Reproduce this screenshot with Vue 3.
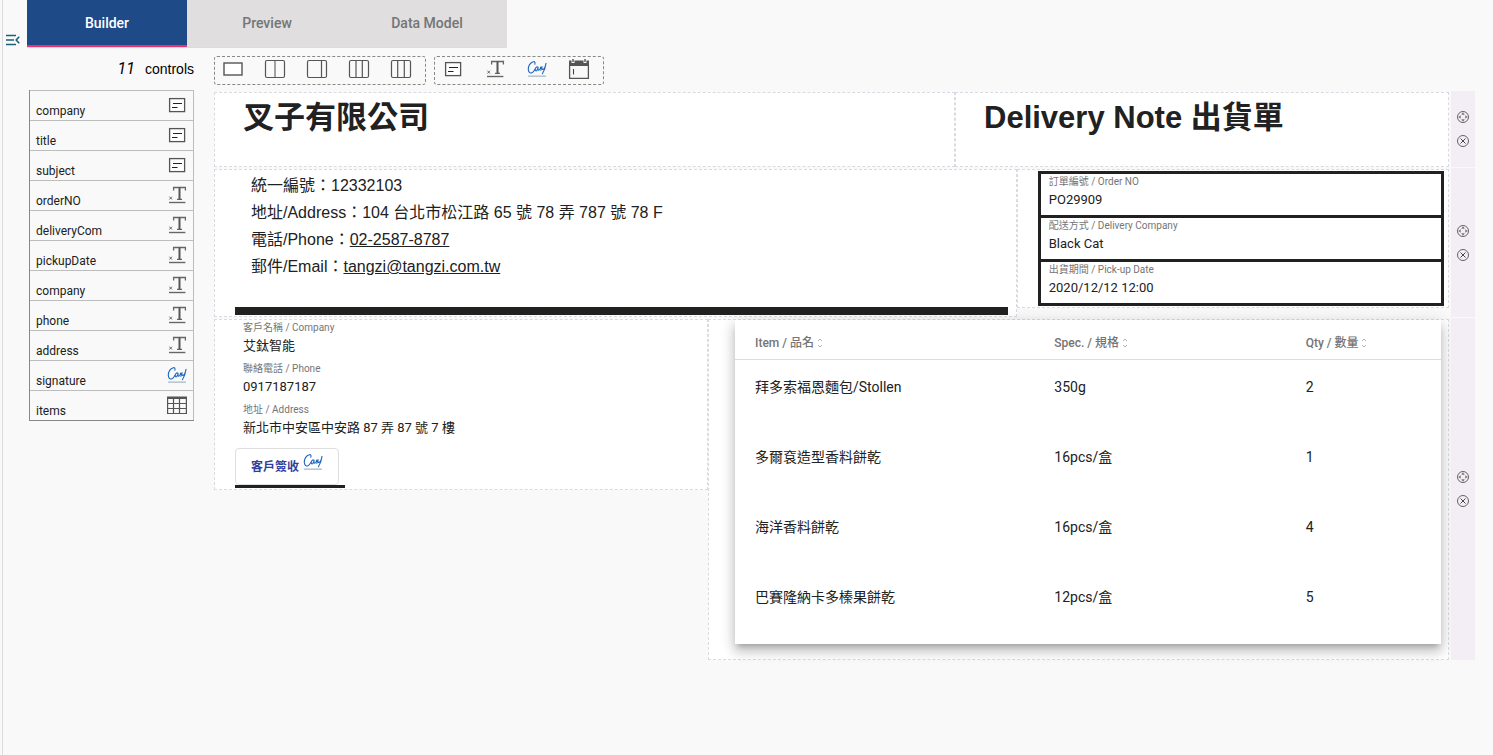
<script setup>
import { ref } from 'vue'

const tabs = ['Builder', 'Preview', 'Data Model']
const activeTab = ref('Builder')

const controls = [
  { name: 'company', icon: 'label' },
  { name: 'title', icon: 'label' },
  { name: 'subject', icon: 'label' },
  { name: 'orderNO', icon: 'input' },
  { name: 'deliveryCom', icon: 'input' },
  { name: 'pickupDate', icon: 'input' },
  { name: 'company', icon: 'input' },
  { name: 'phone', icon: 'input' },
  { name: 'address', icon: 'input' },
  { name: 'signature', icon: 'sign' },
  { name: 'items', icon: 'grid' },
]

const toolGroups = [
  ['col-1', 'col-2', 'col-2-side', 'col-3', 'col-3-wide'],
  ['label', 'input', 'sign', 'calendar'],
]

const orderFields = [
  { label: '訂單編號 / Order NO', value: 'PO29909' },
  { label: '配送方式 / Delivery Company', value: 'Black Cat' },
  { label: '出貨期間 / Pick-up Date', value: '2020/12/12 12:00' },
]

const customerFields = [
  { label: '客戶名稱 / Company', value: '艾鈦智能' },
  { label: '聯絡電話 / Phone', value: '0917187187' },
  { label: '地址 / Address', value: '新北市中安區中安路 87 弄 87 號 7 樓' },
]

const columns = ['Item / 品名', 'Spec. / 規格', 'Qty / 數量']
const items = [
  ['拜多索福恩麵包/Stollen', '350g', '2'],
  ['多爾袞造型香料餅乾', '16pcs/盒', '1'],
  ['海洋香料餅乾', '16pcs/盒', '4'],
  ['巴賽隆納卡多榛果餅乾', '12pcs/盒', '5'],
]
</script>

<template>
  <div class="page">
    <svg class="sprite" aria-hidden="true">
      <symbol id="i-col-1" viewBox="0 0 24 24">
        <rect x="3" y="6" width="18" height="12" fill="#fff" stroke="#555" stroke-width="1.4" />
      </symbol>
      <symbol id="i-col-2" viewBox="0 0 24 24">
        <rect x="2.5" y="3.5" width="19" height="17" rx="1.5" fill="none" stroke="#555" stroke-width="1.2" />
        <path d="M12 4v16" stroke="#666" stroke-width="1.2" />
      </symbol>
      <symbol id="i-col-2-side" viewBox="0 0 24 24">
        <rect x="2.5" y="3.5" width="19" height="17" rx="1.5" fill="none" stroke="#555" stroke-width="1.2" />
        <path d="M16.5 4v16" stroke="#555" stroke-width="1.2" />
      </symbol>
      <symbol id="i-col-3" viewBox="0 0 24 24">
        <rect x="2.5" y="3.5" width="19" height="17" rx="1.5" fill="none" stroke="#555" stroke-width="1.2" />
        <path d="M9 4v16M15.3 4v16" stroke="#555" stroke-width="1.2" />
      </symbol>
      <symbol id="i-col-3-wide" viewBox="0 0 24 24">
        <rect x="2.5" y="3.5" width="19" height="17" rx="1.5" fill="none" stroke="#555" stroke-width="1.2" />
        <path d="M8.7 4v16M15.3 4v16" stroke="#555" stroke-width="1.2" />
      </symbol>
      <symbol id="i-label" viewBox="0 0 24 24">
        <rect x="4.6" y="5.6" width="15" height="13" fill="#fff" stroke="#555" stroke-width="1.3" />
        <path d="M8 10.500h9M7 14.500h5.500" stroke="#222" stroke-width="1.2" />
      </symbol>
      <symbol id="i-input" viewBox="0 0 24 24">
        <path d="M8.600 7.500v-3h11.800v3M12 16.400h5" fill="none" stroke="#666" stroke-width="1.3" />
        <path d="M14.500 4.500v12" stroke="#555" stroke-width="2" />
        <path d="M4.400 13.700l2.600 2.800M7 13.700l-2.600 2.800" stroke="#555" stroke-width=".9" />
        <path d="M4 19.500h16.400" stroke="#666" stroke-width="1.4" />
      </symbol>
      <symbol id="i-sign" viewBox="0 0 24 24">
        <path
          d="M9.800 7.200c.6-1.700 0-2.900-1.500-2.500C5.200 5.400 3 9.200 3.300 12.600c.3 3.200 2.600 4.400 4.600 2.600.9-.8 1.500-2 2.100-3.200M13 10.200c-1.300-.9-2.600.6-2.800 2.200-.1 1.500.9 1.900 1.700.9.600-.8 1-1.700 1.200-2.700-.3 1.700 0 2.900.8 2.600.9-.4 1.400-1.700 1.700-3.200.5 1.200.9 2.400.3 3.300M17 9.600c-.2 1.600 0 3 .8 2.900 1.300-.2 2.600-3.300 3.200-6.200-.5 3.600-1.600 7.400-3.600 10.400"
          fill="none" stroke="#1f66c1" stroke-width="1.1" stroke-linecap="round" stroke-linejoin="round" />
        <path d="M3 19.200h18" stroke="#b9c6d0" stroke-width="1.600" />
      </symbol>
      <symbol id="i-calendar" viewBox="0 0 24 24">
        <path d="M2 3.500h2.500v2.500h3v-2.500h9v2.500h3v-2.500h2.500v5.500H2z" fill="#555" />
        <path d="M6 2v3M18 2v3" stroke="#555" stroke-width="1.400" />
        <path d="M2.600 8v13.300h18.800V8" fill="none" stroke="#555" stroke-width="1.300" />
        <path d="M6.500 12v5.500" stroke="#444" stroke-width="1.100" />
      </symbol>
      <symbol id="i-grid" viewBox="0 0 24 24">
        <path d="M2 3.500h20v2.500H2z" fill="#555" />
        <path d="M2.600 4v16.500h18.800V4M2 10.500h20M2 15.500h20M8.500 6v14.500M14.500 6v14.500" fill="none" stroke="#555" stroke-width="1.200" />
      </symbol>
      <symbol id="i-move" viewBox="0 0 14 14">
        <circle cx="7" cy="7" r="5.500" fill="none" stroke="#555" stroke-width=".9" />
        <path d="M7 2.300l1.800 2.400h-3.600zM7 11.700l1.800-2.400h-3.600zM2.300 7l2.400-1.800v3.600zM11.700 7L9.300 5.200v3.600z" fill="#777" />
      </symbol>
      <symbol id="i-remove" viewBox="0 0 14 14">
        <circle cx="7" cy="7" r="5.500" fill="none" stroke="#555" stroke-width=".9" />
        <path d="M4.500 4.500l5 5M9.500 4.500l-5 5" stroke="#333" stroke-width=".9" />
      </symbol>
      <symbol id="i-sort" viewBox="0 0 8 12">
        <path d="M2 4L4 2l2 2M2 8l2 2 2-2" fill="none" stroke="#aaa" stroke-width=".9" />
      </symbol>
    </svg>

    <aside class="gutter">
      <button class="toggle" type="button" aria-label="Collapse controls">
        <svg width="16" height="12" viewBox="0 0 16 12">
          <path d="M1 1.500h10M1 6h8M1 10.500h10M14.200 2.800L11.200 6l3 3.200" fill="none" stroke="#1d5f7c" stroke-width="1.600" />
        </svg>
      </button>
    </aside>

    <div class="main">
      <nav class="tabs" role="tablist">
        <button
          v-for="tab in tabs" :key="tab" type="button" role="tab" class="tab"
          :class="{ active: tab === activeTab }" :aria-selected="tab === activeTab"
          @click="activeTab = tab"
        >{{ tab }}</button>
      </nav>

      <div class="body">
        <section class="sidebar">
          <h2 class="count"><em>{{ controls.length }}</em><span>controls</span></h2>
          <ul class="control-list">
            <li v-for="(control, i) in controls" :key="i">
              <span class="control-name">{{ control.name }}</span>
              <svg class="icon"><use :href="'#i-' + control.icon" /></svg>
            </li>
          </ul>
        </section>

        <main class="workspace">
          <div class="toolbar">
            <div v-for="(group, g) in toolGroups" :key="g" class="tool-group">
              <button v-for="tool in group" :key="tool" type="button" class="tool" :aria-label="tool">
                <svg class="icon"><use :href="'#i-' + tool" /></svg>
              </button>
            </div>
          </div>

          <div class="row">
            <div class="cells split-60">
              <div class="cell"><h1>叉子有限公司</h1></div>
              <div class="cell"><h1>Delivery Note 出貨單</h1></div>
            </div>
            <div class="strip">
              <button type="button" aria-label="Move row"><svg><use href="#i-move" /></svg></button>
              <button type="button" aria-label="Remove row"><svg><use href="#i-remove" /></svg></button>
            </div>
          </div>

          <div class="row">
            <div class="cells split-65">
              <div class="cell contact-cell">
                <address class="contact">
                  <p>統一編號：12332103</p>
                  <p>地址/Address：104 台北市松江路 65 號 78 弄 787 號 78 F</p>
                  <p>電話/Phone：<a href="tel:02-2587-8787">02-2587-8787</a></p>
                  <p>郵件/Email：<a href="mailto:tangzi@tangzi.com.tw">tangzi@tangzi.com.tw</a></p>
                </address>
              </div>
              <div class="cell order-cell">
                <dl class="order">
                  <div v-for="field in orderFields" :key="field.label" class="field">
                    <dt>{{ field.label }}</dt>
                    <dd>{{ field.value }}</dd>
                  </div>
                </dl>
              </div>
            </div>
            <div class="strip">
              <button type="button" aria-label="Move row"><svg><use href="#i-move" /></svg></button>
              <button type="button" aria-label="Remove row"><svg><use href="#i-remove" /></svg></button>
            </div>
          </div>

          <div class="row">
            <div class="cells split-40">
              <div class="cell customer-cell">
                <dl>
                  <div v-for="field in customerFields" :key="field.label" class="field">
                    <dt>{{ field.label }}</dt>
                    <dd>{{ field.value }}</dd>
                  </div>
                </dl>
                <div class="sign-line">
                  <button type="button" class="sign-button">
                    客戶簽收
                    <svg class="icon"><use href="#i-sign" /></svg>
                  </button>
                </div>
              </div>
              <div class="cell table-cell">
                <table>
                  <thead>
                    <tr>
                      <th v-for="column in columns" :key="column" scope="col">
                        {{ column }}<svg class="sort"><use href="#i-sort" /></svg>
                      </th>
                    </tr>
                  </thead>
                  <tbody>
                    <tr v-for="item in items" :key="item[0]">
                      <td v-for="(value, v) in item" :key="v">{{ value }}</td>
                    </tr>
                  </tbody>
                </table>
              </div>
            </div>
            <div class="strip">
              <button type="button" aria-label="Move row"><svg><use href="#i-move" /></svg></button>
              <button type="button" aria-label="Remove row"><svg><use href="#i-remove" /></svg></button>
            </div>
          </div>
        </main>
      </div>
    </div>
  </div>
</template>

<style>
body {
  background: #f9f9f9;
}
</style>

<style scoped>
.page {
  display: flex;
  min-height: 100vh;
  margin-left: 2px;
  border-left: 1px solid #dcdcdc;
  box-sizing: border-box;
  color: #212121;
  font-family: Roboto, "Noto Sans CJK TC", sans-serif;
  font-size: 13px;
}
.page * {
  box-sizing: border-box;
}
.sprite {
  display: none;
}
button {
  padding: 0;
  border: 0;
  background: none;
  font-family: inherit;
  cursor: pointer;
}
h1, h2, p, ul, dl, dd {
  margin: 0;
  padding: 0;
}
.icon {
  display: block;
  flex: none;
  width: 24px;
  height: 24px;
}
.gutter {
  flex: none;
  width: 24px;
  padding-top: 34px;
}
.toggle {
  display: block;
  margin-left: 2px;
}
.toggle svg {
  display: block;
}
.main {
  flex: 1;
  min-width: 0;
}
.tabs {
  display: flex;
  width: max-content;
  background: #e0dede;
  border-bottom: 1px solid #dcdcdc;
}
.tab {
  width: 160px;
  height: 47px;
  border-bottom: 2px solid transparent;
  color: #757575;
  font-size: 14px;
  font-weight: 500;
}
.tab.active {
  background: #1e4a87;
  border-bottom-color: #f0306c;
  color: #fff;
}
.body {
  display: flex;
  gap: 20px;
  padding: 0 18px 0 2px;
}
.sidebar {
  flex: none;
  width: 165px;
}
.count {
  display: flex;
  justify-content: flex-end;
  align-items: center;
  gap: 10px;
  height: 42px;
  color: #000;
  font-family: "Liberation Sans", sans-serif;
  font-size: 14px;
  font-weight: 400;
}
.count em {
  padding-bottom: 2px;
  font-family: Roboto, sans-serif;
  font-size: 16px;
}
.control-list {
  list-style: none;
  border: solid #888;
  border-width: 0 0 1px 1px;
}
.control-list li {
  display: flex;
  justify-content: space-between;
  align-items: flex-start;
  height: 30px;
  padding: 2px 4px 0 6px;
  border: solid #bdbdbd;
  border-width: 1px 1px 0 0;
}
.control-name {
  align-self: flex-end;
  font-size: 12px;
  line-height: 18px;
}
.workspace {
  flex: 1;
  min-width: 0;
}
.toolbar {
  display: flex;
  gap: 8px;
  padding: 8px 0 6px;
}
.tool-group {
  display: flex;
  align-items: flex-start;
  height: 29px;
  border: 1px dashed #888;
  border-radius: 3px;
}
.tool {
  width: 42px;
  padding-left: 6px;
}
.row {
  display: flex;
  gap: 2px;
  margin-bottom: 1px;
}
.cells {
  display: grid;
  flex: 1;
  align-items: start;
  min-width: 0;
  padding-top: 1px;
}
.split-60 {
  grid-template-columns: 60fr 40fr;
}
.split-65 {
  grid-template-columns: 65fr 35fr;
}
.split-40 {
  grid-template-columns: 40fr 60fr;
}
.cell {
  min-width: 0;
  border: 1px dashed #dadae2;
  background: #fff;
}
.strip {
  display: flex;
  flex: none;
  flex-direction: column;
  justify-content: center;
  width: 24px;
  background: #f3eef5;
}
.strip button {
  display: grid;
  place-items: center;
  height: 24px;
}
.strip svg {
  width: 14px;
  height: 14px;
}
h1 {
  padding: 0 28px 23px;
  font-family: "Liberation Sans", "Noto Sans CJK TC", sans-serif;
  font-size: 31px;
  font-weight: 700;
  line-height: 50px;
}
.contact-cell {
  padding: 2px 8px 1px 20px;
}
.contact {
  padding: 0 16px 27px;
  border-bottom: 8px solid #212121;
  font-family: "Liberation Sans", "Noto Sans CJK TC", sans-serif;
  font-size: 16px;
  font-style: normal;
  line-height: 27px;
}
.contact a {
  color: inherit;
}
.order-cell {
  padding: 1px 4px 1px 20px;
}
.order {
  border: 3px solid #212121;
  border-top: 0;
}
.order .field {
  border-top: 3px solid #212121;
}
.field {
  padding: 1px 8px 6px;
}
.order .field {
  height: 44px;
}
.field dt {
  margin-bottom: 2px;
  color: #757575;
  font-size: 10px;
  line-height: 14px;
}
.field dd {
  line-height: 18px;
}
.customer-cell {
  padding: 0 8px 1px 20px;
}
.sign-line {
  width: 110px;
  margin-top: 5px;
  border-bottom: 3px solid #212121;
}
.sign-button {
  display: flex;
  align-items: center;
  gap: 2px;
  height: 37px;
  padding: 0 13px 2px 15px;
  border: 1px solid #dedede;
  border-radius: 4px;
  color: #303f9f;
  font-size: 12px;
  font-weight: 600;
}
.sign-button .icon {
  margin-bottom: 8px;
}
.table-cell {
  padding: 0 7px 15px 26px;
}
table {
  width: 100%;
  padding-bottom: 4px;
  border-spacing: 0;
  table-layout: fixed;
  background: #fff;
  box-shadow: 0 5px 5px -3px rgba(0, 0, 0, .2), 0 8px 10px 1px rgba(0, 0, 0, .14), 0 3px 14px 2px rgba(0, 0, 0, .12);
}
th, td {
  padding: 0 0 0 20px;
  text-align: left;
}
th {
  height: 40px;
  padding-top: 4px;
  border-bottom: 1px solid #dcdcdc;
  color: #757575;
  font-size: 12px;
  font-weight: 500;
}
th:nth-child(1) {
  width: 42.4%;
}
th:nth-child(2) {
  width: 35.6%;
}
.sort {
  width: 8px;
  height: 12px;
  margin-left: 2px;
  vertical-align: -2px;
}
td {
  height: 70px;
  padding-top: 17px;
  font-size: 14px;
  line-height: 20px;
  vertical-align: top;
}
</style>
